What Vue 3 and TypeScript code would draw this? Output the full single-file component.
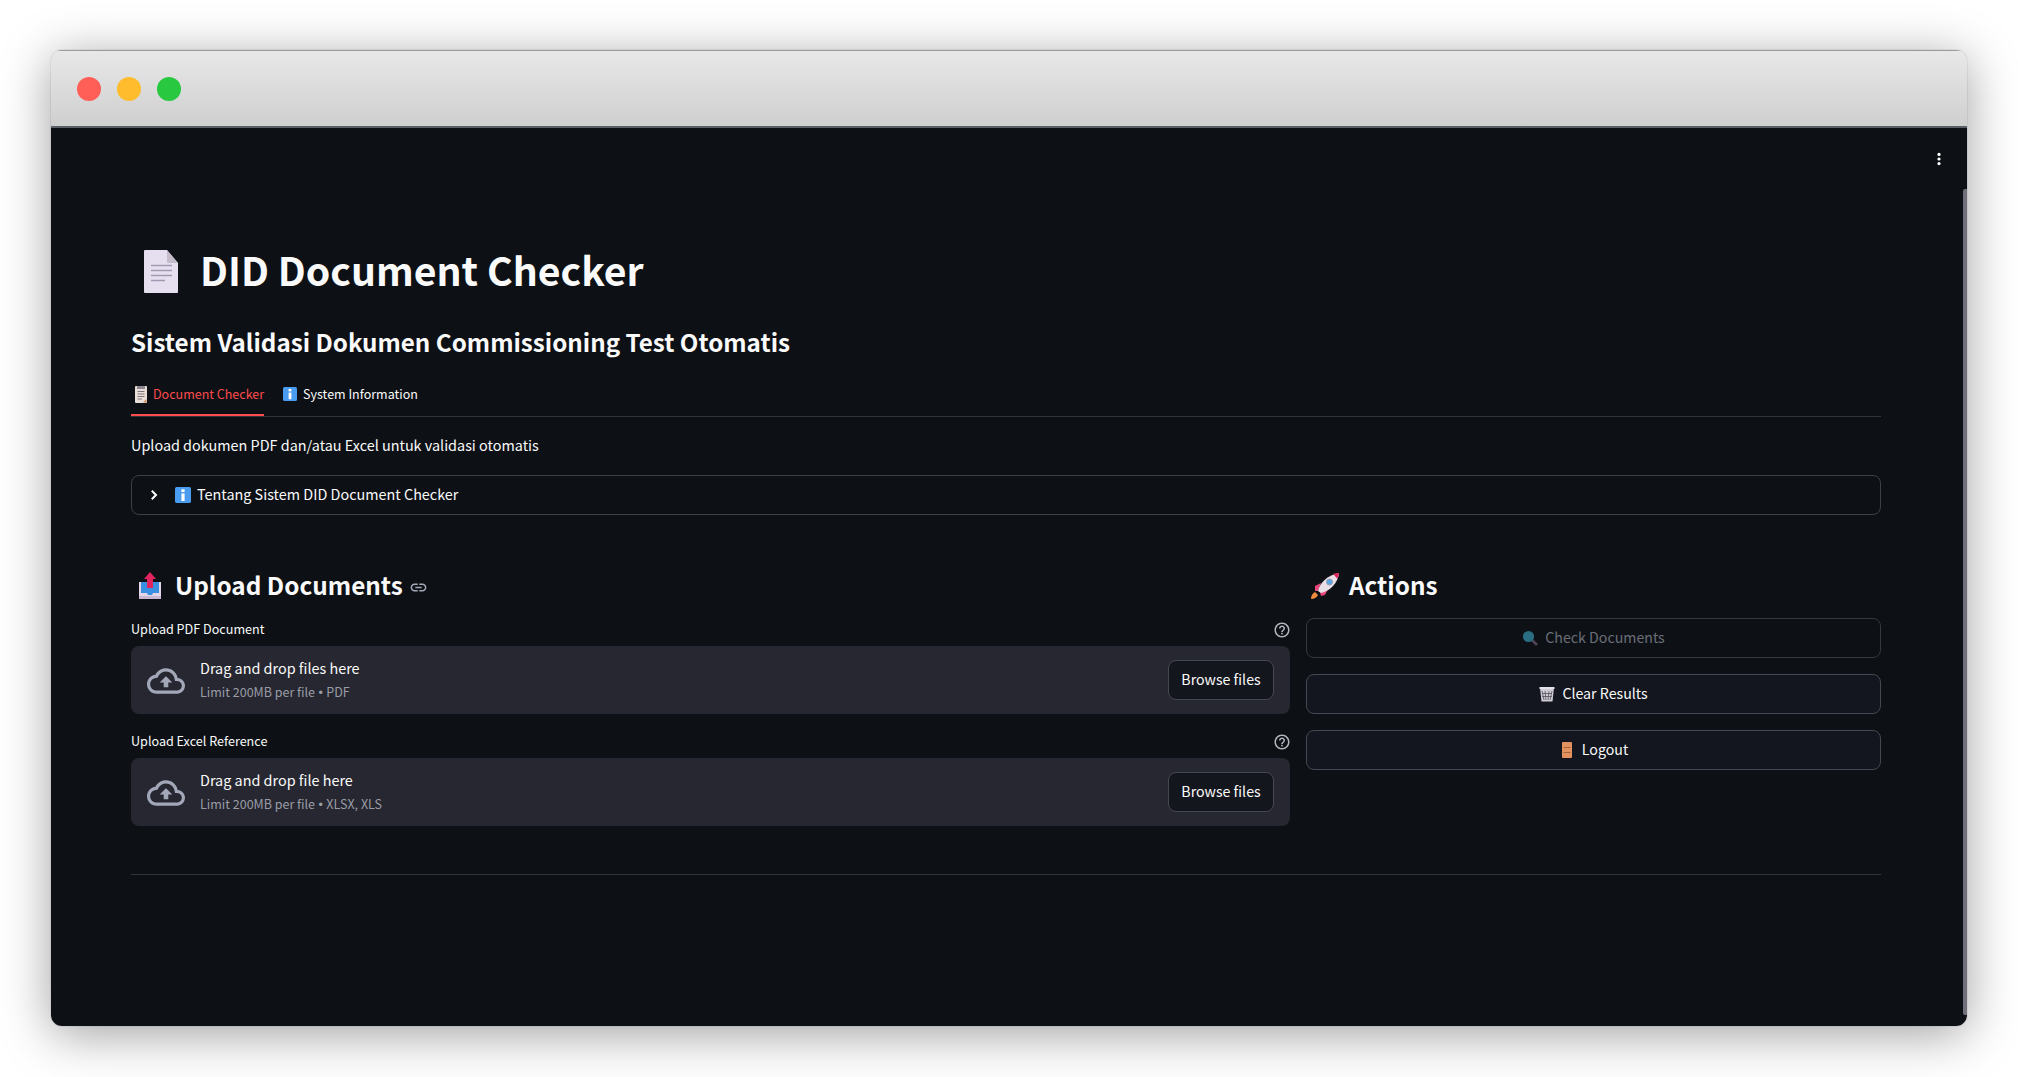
<script setup lang="ts">
interface Drop { label: string; main: string; limit: string; types: string }
const drops: Drop[] = [
  { label: 'Upload PDF Document', main: 'Drag and drop files here', limit: 'Limit 200MB per file', types: 'PDF' },
  { label: 'Upload Excel Reference', main: 'Drag and drop file here', limit: 'Limit 200MB per file', types: 'XLSX, XLS' },
]
</script>

<template>
  <div class="window">
    <header class="titlebar">
      <span class="dot red"></span>
      <span class="dot yellow"></span>
      <span class="dot green"></span>
    </header>
    <main class="page">
      <svg class="menu" width="16" height="16" viewBox="0 0 16 16" fill="#fff"><circle cx="8" cy="3.4" r="1.6"/><circle cx="8" cy="8" r="1.6"/><circle cx="8" cy="12.6" r="1.6"/></svg>
      <div class="scrollbar"></div>

      <h1 class="title">
        <svg class="title-emoji" width="34" height="43" viewBox="0 0 34 43">
          <path d="M1 0H23L34 13V42a1 1 0 0 1-1 1H1a1 1 0 0 1-1-1V1a1 1 0 0 1 1-1z" fill="#e6dff0"/>
          <path d="M23 0L34 13H24a1 1 0 0 1-1-1z" fill="#c3bccb"/>
          <path d="M7 15.5H28M7 20.5H28M7 25.5H28M7 30.5H21" stroke="#a29ab0" stroke-width="1.6"/>
        </svg>
        <span>DID Document Checker</span>
      </h1>
      <h2 class="subtitle">Sistem Validasi Dokumen Commissioning Test Otomatis</h2>

      <nav class="tabs">
        <div class="tab active">
          <svg width="12" height="17" viewBox="0 0 12 17"><rect width="12" height="17" rx="1" fill="#e9dfd8"/><rect x="2" y="0" width="8" height="3" fill="#8b8690"/><path d="M2.5 5.5H9.5M2.5 8H9.5M2.5 10.5H9.5M2.5 13H7" stroke="#7d7780" stroke-width="1"/><path d="M8 16.5L11.5 13V16.5z" fill="#d88a4e"/></svg>
          <span>Document Checker</span>
        </div>
        <div class="tab">
          <svg width="14" height="14" viewBox="0 0 14 14"><rect width="14" height="14" rx="1.5" fill="#4a9cf0"/><rect x="5.6" y="2" width="2.8" height="2.4" fill="#fff"/><rect x="5.6" y="5.6" width="2.8" height="6.6" fill="#fff"/></svg>
          <span>System Information</span>
        </div>
      </nav>

      <p class="intro">Upload dokumen PDF dan/atau Excel untuk validasi otomatis</p>

      <div class="expander">
        <svg class="chev" width="10" height="12" viewBox="0 0 10 12" fill="none"><path d="M2.8 1.8L7 6L2.8 10.2" stroke="#fff" stroke-width="2"/></svg>
        <svg class="info" width="16" height="16" viewBox="0 0 14 14"><rect width="14" height="14" rx="1.5" fill="#4a9cf0"/><rect x="5.6" y="2" width="2.8" height="2.4" fill="#fff"/><rect x="5.6" y="5.6" width="2.8" height="6.6" fill="#fff"/></svg>
        <span class="exp-text">Tentang Sistem DID Document Checker</span>
      </div>

      <section class="columns">
        <div class="col-left">
          <h3 class="heading">
            <svg class="heading-emoji" width="24" height="28" viewBox="0 0 24 28">
              <path d="M1 10H23V25a2 2 0 0 1-2 2H3a2 2 0 0 1-2-2z" fill="#e3d6e8"/>
              <path d="M3 10H21V21H15l-1 2H10l-1-2H3z" fill="#3a8fe0"/>
              <path d="M12 0L18 7H15V16H9V7H6z" fill="#e0245e"/>
              <path d="M1 24H23V27H1z" fill="#c9b8d2"/>
            </svg>
            <span>Upload Documents</span>
            <svg class="link" width="19" height="19" viewBox="0 0 24 24" fill="#a3a8b8"><path d="M3.9 12c0-1.71 1.39-3.1 3.1-3.1h4V7H7c-2.76 0-5 2.24-5 5s2.24 5 5 5h4v-1.9H7c-1.71 0-3.1-1.39-3.1-3.1zM8 13h8v-2H8v2zm9-6h-4v1.9h4c1.71 0 3.1 1.39 3.1 3.1s-1.39 3.1-3.1 3.1h-4V17h4c2.76 0 5-2.24 5-5s-2.24-5-5-5z"/></svg>
          </h3>
          <div v-for="d in drops" :key="d.label" class="field">
            <div class="label-row">
              <span>{{ d.label }}</span>
              <svg width="18" height="18" viewBox="0 0 24 24" fill="#b4b6bd"><path d="M11 18h2v-2h-2v2zm1-16C6.48 2 2 6.48 2 12s4.48 10 10 10 10-4.48 10-10S17.52 2 12 2zm0 18c-4.41 0-8-3.59-8-8s3.59-8 8-8 8 3.59 8 8-3.59 8-8 8zm0-14c-2.21 0-4 1.79-4 4h2c0-1.1.9-2 2-2s2 .9 2 2c0 2-3 1.75-3 5h2c0-2.25 3-2.5 3-5 0-2.21-1.79-4-4-4z"/></svg>
            </div>
            <div class="drop">
              <svg class="cloud" width="38" height="38" viewBox="0 0 24 24" fill="#a3a8b8"><path d="M19.35 10.04C18.67 6.59 15.64 4 12 4 9.11 4 6.6 5.64 5.35 8.04 2.34 8.36 0 10.91 0 14c0 3.31 2.69 6 6 6h13c2.76 0 5-2.24 5-5 0-2.64-2.05-4.78-4.65-4.96zM19 18H6c-2.21 0-4-1.79-4-4 0-2.05 1.53-3.76 3.56-3.97l1.07-.11.5-.95C8.08 7.14 9.94 6 12 6c2.62 0 4.88 1.86 5.39 4.43l.3 1.5 1.53.11c1.56.1 2.78 1.41 2.78 2.96 0 1.65-1.35 3-3 3zM8 13h2.55v3h2.9v-3H16l-4-4z"/></svg>
              <div class="drop-text">
                <div class="drop-main">{{ d.main }}</div>
                <div class="drop-limit">{{ d.limit }}<span class="bullet"> • </span>{{ d.types }}</div>
              </div>
              <button class="btn browse">Browse files</button>
            </div>
          </div>
        </div>

        <div class="col-right">
          <h3 class="heading">
            <svg class="rocket" width="30" height="28" viewBox="0 0 30 28">
              <path d="M1 27c0-4 2-6 4-7l3 3c-1 2-3 4-7 4z" fill="#f08a3c"/>
              <path d="M5 14L11 11 8 19 5 19z" fill="#e8457a"/>
              <path d="M15 23L18 17 10 20 11 24z" fill="#e8457a"/>
              <path d="M8 19C10 10 18 3 29 1 28 11 20 19 11 21z" fill="#e9dfe6"/>
              <path d="M23 1.8L29 1C28.7 3 28.2 5 27.3 6.8z" fill="#e0245e"/>
              <circle cx="19.5" cy="10" r="3" fill="#5aa9e6" stroke="#9a9ab0" stroke-width="1"/>
            </svg>
            <span>Actions</span>
          </h3>
          <div class="actions">
            <button class="btn action disabled">
              <svg class="dim" width="16" height="16" viewBox="0 0 16 16"><path d="M10 10L15 15" stroke="#5b4a63" stroke-width="2.6"/><circle cx="6.5" cy="6.5" r="5.6" fill="#2e7f96"/></svg>
              <span>Check Documents</span>
            </button>
            <button class="btn action">
              <svg width="16" height="16" viewBox="0 0 16 16"><path d="M1 1.5H15L13.5 15.5H2.5z" fill="#cfccd6"/><path d="M3 5L5 14M6 5L7 14M10 5L9 14M13 5L11 14M3 7.5H13M3 10.5H13" stroke="#55525c" stroke-width=".8"/><path d="M0.5 1H15.5V3H0.5z" fill="#e4e2e8"/></svg>
              <span>Clear Results</span>
            </button>
            <button class="btn action">
              <svg width="16" height="16" viewBox="0 0 16 16"><rect x="3" width="10" height="16" rx="1" fill="#e2925f"/><path d="M4.5 5.5H11.5M4.5 10.5H11.5" stroke="#a8633a" stroke-width="1"/></svg>
              <span>Logout</span>
            </button>
          </div>
        </div>
      </section>

      <hr class="divider" />
    </main>
  </div>
</template>

<style>
html, body { margin: 0; background: #fff; }
</style>

<style scoped>
.window {
  box-sizing: border-box;
  width: 1916px;
  height: 976px;
  margin: 50px 0 51px 51px;
  border-radius: 11px;
  overflow: hidden;
  display: flex;
  flex-direction: column;
  box-shadow: 0 0 1px rgba(0,0,0,.5), 0 8px 50px rgba(0,0,0,.38);
  font-family: "Noto Sans CJK SC", "Source Sans Pro", sans-serif;
  color: #fafafa;
  -webkit-font-smoothing: antialiased;
}
.titlebar {
  box-sizing: border-box;
  height: 78px;
  padding-left: 26px;
  display: flex;
  align-items: center;
  gap: 16px;
  background: linear-gradient(#e8e8e8, #cfcfcf);
  border-bottom: 2px solid #5b6068;
  border-top: 1px solid #9a9a9a;
}
.dot { width: 24px; height: 24px; border-radius: 50%; }
.red { background: #ff5f57; }
.yellow { background: #ffbd2e; }
.green { background: #28c840; }
.page {
  position: relative;
  flex: 1;
  background: #0d1116;
  padding: 0 86px 0 80px;
}
.menu { position: absolute; top: 23px; right: 20px; }
.scrollbar {
  position: absolute;
  right: 0;
  top: 61px;
  bottom: 11px;
  width: 4px;
  background: #6f7079;
  border-radius: 2px 0 0 2px;
}
h1, h2, h3, p { margin: 0; }
.title {
  margin-top: 119px;
  height: 48px;
  display: flex;
  align-items: center;
  font-size: 39.2px;
  line-height: 48px;
  font-weight: 700;
}
.title span { padding-bottom: 4px; }
.title-emoji { margin-left: 13px; margin-right: 22px; flex: none; }
.subtitle {
  margin-top: 28px;
  height: 40px;
  font-size: 24.2px;
  line-height: 37px;
  font-weight: 600;
}
.tabs {
  margin-top: 12px;
  height: 42px;
  box-sizing: border-box;
  display: flex;
  gap: 19px;
  border-bottom: 1px solid #31333f;
}
.tab {
  height: 41px;
  box-sizing: border-box;
  display: flex;
  align-items: center;
  gap: 6px;
  font-size: 12.5px;
  line-height: 20px;
  padding-bottom: 3px;
}
.tab.active {
  color: #ff4b4b;
  border-bottom: 2px solid #ff4b4b;
  padding-left: 4px;
  gap: 6px;
  padding-bottom: 1px;
}
.intro {
  margin-top: 17px;
  font-size: 14.4px;
  line-height: 21px;
  height: 24px;
}
.expander {
  box-sizing: border-box;
  margin-top: 17px;
  height: 40px;
  display: flex;
  align-items: center;
  border: 1px solid #3d4048;
  border-radius: 8px;
  padding-left: 17px;
  font-size: 14.4px;
  line-height: 24px;
}
.exp-text { padding-bottom: 2px; margin-left: -1px; }
.chev { margin-right: 16px; }
.info { margin-right: 7px; }
.columns {
  margin-top: 51px;
  display: grid;
  grid-template-columns: 1159px 575px;
  column-gap: 16px;
}
.heading {
  height: 40px;
  display: flex;
  align-items: center;
  font-size: 24.3px;
  line-height: 39px;
  font-weight: 600;
}
.heading span { padding-bottom: 3px; }
.heading-emoji { margin-left: 7px; margin-right: 13px; flex: none; }
.rocket { margin-left: 4px; margin-right: 9px; flex: none; }
.link { margin-left: 6px; margin-top: 3px; }
.field { margin-top: 13px; }
.field + .field { margin-top: 17px; }
.label-row {
  height: 20px;
  display: flex;
  justify-content: space-between;
  align-items: center;
  font-size: 12.6px;
  line-height: 20px;
}
.label-row svg { margin-right: -1px; margin-top: 2px; }
.drop {
  box-sizing: border-box;
  margin-top: 7px;
  height: 68px;
  display: flex;
  align-items: center;
  padding: 0 16px;
  background: #262730;
  border-radius: 8px;
}
.cloud { flex: none; margin-right: 15px; margin-top: 1px; }
.drop-text { flex: 1; padding-top: 2px; }
.drop-main { font-size: 14.4px; line-height: 23px; }
.drop-limit { font-size: 12.5px; line-height: 25px; color: #999ca5; }
.bullet { font-family: "Liberation Sans", sans-serif; }
.btn {
  box-sizing: border-box;
  font-family: inherit;
  font-size: 14.2px;
  color: #fafafa;
  background: #13161e;
  border: 1px solid #454852;
  border-radius: 8px;
  height: 40px;
  line-height: 22px;
}
.browse { width: 106px; padding: 0 0 2px; background: #14161e; }
.actions {
  margin-top: 12px;
  display: flex;
  flex-direction: column;
  gap: 16px;
}
.action {
  width: 100%;
  display: flex;
  align-items: center;
  justify-content: center;
  gap: 7px;
  padding: 0;
}
.action span { margin-top: -2px; }
.disabled { color: #6b6e76; background: #0d1116; border-color: #363942; }
.dim { opacity: .85; }
.divider {
  margin: 48px 0 0;
  border: 0;
  border-top: 1px solid #31333f;
}
</style>
